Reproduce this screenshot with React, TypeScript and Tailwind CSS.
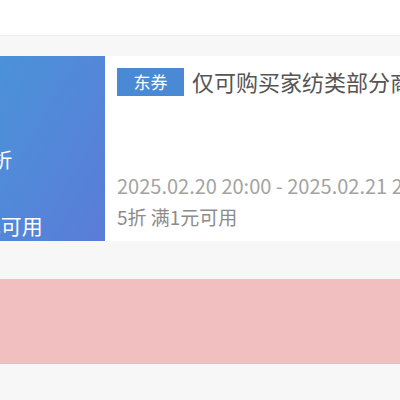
import React from "react"

const font = { fontFamily: '"Noto Sans CJK SC", "Noto Sans", sans-serif' }

function CouponCard() {
  return (
    <div className="flex h-[185px] bg-white">
      <div className="w-[105px] shrink-0 overflow-hidden bg-gradient-to-br from-[#4a92d9] to-[#5a7cd8] text-white">
        <div className="-ml-[105px] flex w-[200px] flex-col items-center">
          <div className="mt-[88px] flex items-baseline leading-none">
            <span className="text-[26px]">5</span>
            <span className="text-[20px]">折</span>
          </div>
          <div className="mt-[45px] text-[21px] leading-none">满1元可用</div>
        </div>
      </div>
      <div className="flex min-w-0 flex-1 flex-col pl-3 pt-[9px]">
        <div className="flex items-center gap-2 whitespace-nowrap">
          <span className="flex h-[28px] w-[67px] shrink-0 items-center justify-center bg-[#4a8ad5] text-[17px] text-white">
            东券
          </span>
          <span className="text-[22px] text-[#555]">仅可购买家纺类部分商品</span>
        </div>
        <div className="mt-auto pb-[8px]">
          <div className="whitespace-nowrap text-[20px] leading-[30px] text-[#a3a3a3]">
            2025.02.20 20:00 - 2025.02.21 20:00
          </div>
          <div className="whitespace-nowrap text-[19px] leading-[32px] text-[#8c8c8c]">5折 满1元可用</div>
        </div>
      </div>
    </div>
  )
}

export default function App() {
  return (
    <div className="h-[400px] w-[400px] overflow-hidden bg-[#f7f7f7]" style={font}>
      <div className="h-[36px] border-b border-[#ececec] bg-white" />
      <div className="pt-[20px]">
        <CouponCard />
      </div>
      <div className="mt-[38px] h-[85px] border-b border-[#dcc3c5] bg-[#f2bfc1]" />
    </div>
  )
}
